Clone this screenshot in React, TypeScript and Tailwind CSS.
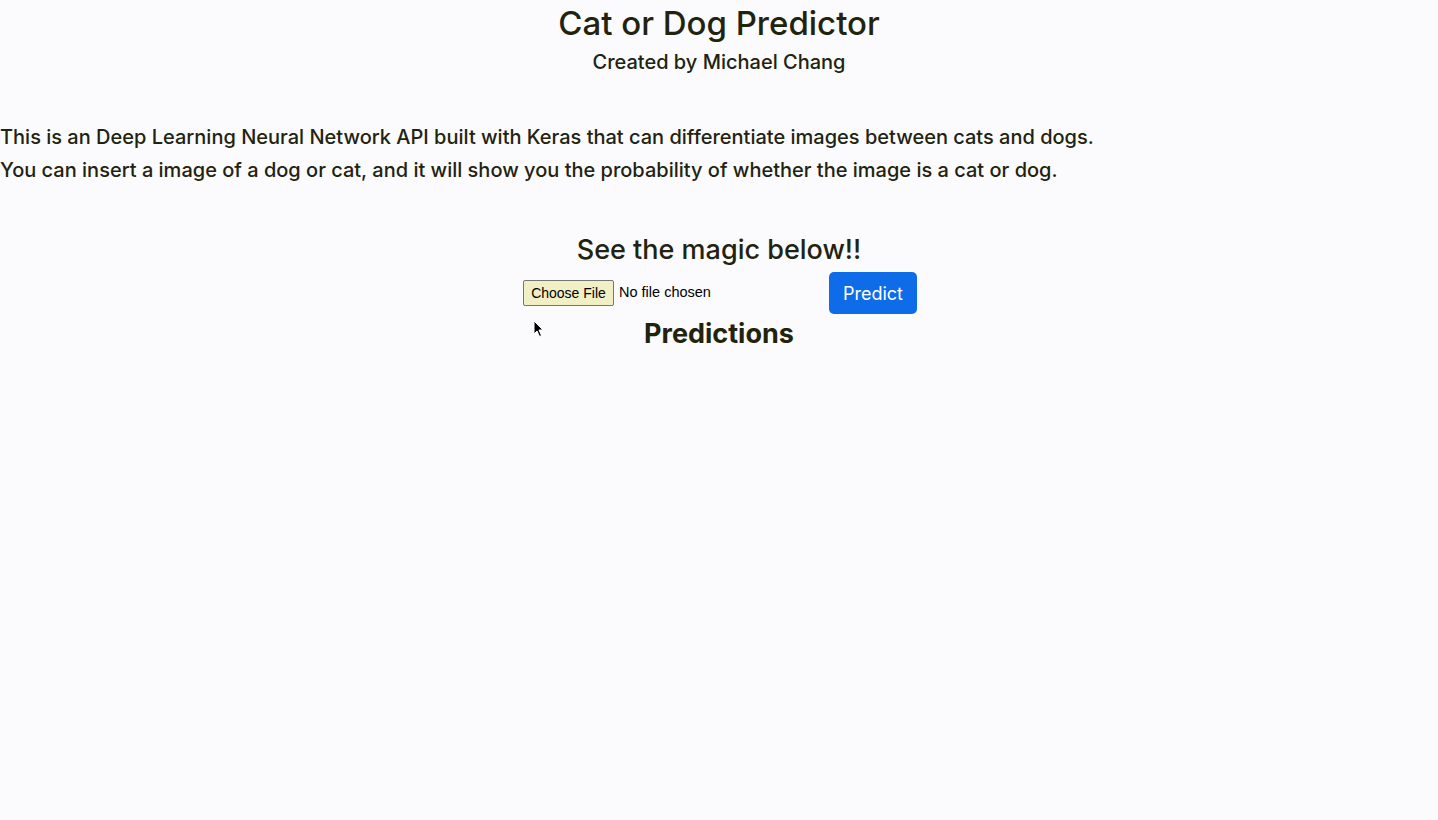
import React from "react";

export default function App() {
  return (
    <div
      className="min-h-[820px] w-full bg-[#fbfbfe] text-[#22230f]"
      style={{ fontFamily: "Inter, 'Noto Sans', sans-serif" }}
    >
      <div className="flex flex-col items-center pt-[4px]">
        <h1 className="text-[33px] leading-[38px] font-medium">Cat or Dog Predictor</h1>
        <h2 className="text-[20px] leading-[24px] font-medium mt-[8px]">Created by Michael Chang</h2>
      </div>
      <div className="mt-[47px] text-[20px] leading-[33px] font-medium">
        <p>This is an Deep Learning Neural Network API built with Keras that can differentiate images between cats and dogs.</p>
        <p>You can insert a image of a dog or cat, and it will show you the probability of whether the image is a cat or dog.</p>
      </div>
      <div className="mt-[46px] flex flex-col items-center">
        <h3 className="text-[27px] leading-[34px] font-medium">See the magic below!!</h3>
        <div className="relative flex items-center mt-[5px] w-[396px] pl-[2px]">
          <div className="flex items-center w-[306px]" style={{ fontFamily: "'Liberation Sans', Arial, sans-serif" }}>
            <span className="h-[26px] w-[91px] border border-[#767676] rounded-[2px] bg-[#f1efc4] text-[14px] text-black flex items-center justify-center">Choose File</span>
            <span className="ml-[5px] text-[14.5px] text-black">No file chosen</span>
          </div>
          <button className="h-[42px] w-[88px] rounded-[5px] bg-[#0f6ce8] text-white text-[18px]">Predict</button>
        </div>
        <div className="relative w-full flex justify-center">
          <h3 className="text-[27px] leading-[34px] font-bold mt-[3px]">Predictions</h3>
          <svg className="absolute left-[533px] top-[6px]" width="12" height="18" viewBox="0 0 12 18">
            <path d="M1 1 L1 14 L4 11 L6.5 16.5 L8.5 15.5 L6 10 L10 10 Z" fill="#000" stroke="#fff" strokeWidth="1" />
          </svg>
        </div>
      </div>
    </div>
  );
}
